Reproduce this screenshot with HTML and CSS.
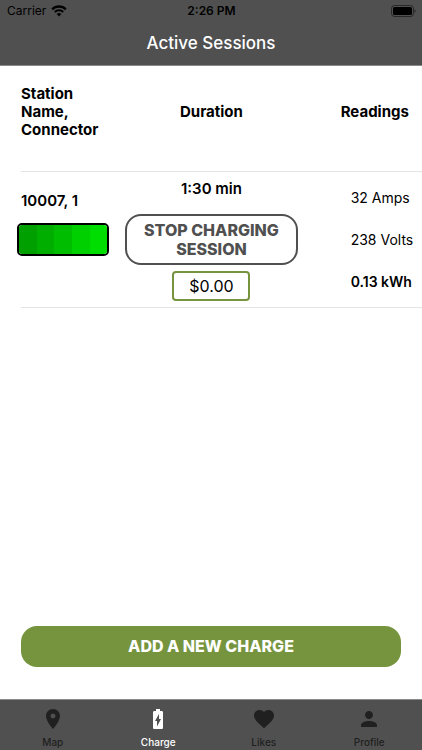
FILE: index.html
```html
<!DOCTYPE html>
<html lang="en">
<head>
<meta charset="utf-8">
<meta name="viewport" content="width=device-width, initial-scale=1">
<title>Active Sessions</title>
<link rel="stylesheet" href="styles.css">
</head>
<body>
<header class="top">
  <div class="status">
    <div class="carrier">
      <span>Carrier</span>
      <svg class="wifi" viewBox="0 0 16 12" aria-hidden="true">
        <path d="M1.2 4.3a9.7 9.7 0 0 1 13.6 0" fill="none" stroke="currentColor" stroke-width="2.4"/>
        <path d="M3.8 7a6 6 0 0 1 8.4 0" fill="none" stroke="currentColor" stroke-width="2.1"/>
        <path d="M5.7 9.1a3.3 3.3 0 0 1 4.6 0L8 11.5z" fill="currentColor"/>
      </svg>
    </div>
    <span class="clock">2:26 PM</span>
    <svg class="power" viewBox="0 0 25 12" aria-hidden="true">
      <rect x=".5" y=".5" width="22" height="11" rx="3" fill="none" stroke="currentColor" opacity=".5"/>
      <rect x="2" y="2" width="19" height="8" rx="1.5" fill="currentColor"/>
      <path d="M23.6 4.2c1.4.5 1.4 3.1 0 3.6z" fill="currentColor" opacity=".6"/>
    </svg>
  </div>
  <h1 class="title">Active Sessions</h1>
</header>

<main class="content">
  <table class="sessions">
    <thead>
      <tr>
        <th class="station" scope="col">Station Name, Connector</th>
        <th class="duration" scope="col">Duration</th>
        <th class="readings" scope="col">Readings</th>
      </tr>
    </thead>
    <tbody>
      <tr>
        <td class="station">
          <div class="name">10007, 1</div>
          <div class="level" role="img" aria-label="Charging">
            <span class="cell cell-1"></span><span class="cell cell-2"></span><span class="cell cell-3"></span><span class="cell cell-4"></span><span class="cell cell-5"></span>
          </div>
        </td>
        <td class="duration">
          <div class="time">1:30 min</div>
          <button class="stop" type="button">STOP CHARGING SESSION</button>
          <div class="price">$0.00</div>
        </td>
        <td class="readings">
          <ul class="values">
            <li>32 Amps</li>
            <li>238 Volts</li>
            <li class="energy">0.13 kWh</li>
          </ul>
        </td>
      </tr>
    </tbody>
  </table>
  <button class="add" type="button">ADD A NEW CHARGE</button>
</main>

<nav class="tabs">
  <a class="tab" href="#map">
    <svg class="icon" viewBox="0 0 24 24" aria-hidden="true"><path d="M12 2C8.13 2 5 5.13 5 9c0 5.25 7 13 7 13s7-7.75 7-13c0-3.87-3.13-7-7-7zm0 9.5a2.5 2.5 0 0 1 0-5 2.5 2.5 0 0 1 0 5z"/></svg>
    <span>Map</span>
  </a>
  <a class="tab active" href="#charge" aria-current="page">
    <svg class="icon" viewBox="0 0 24 24" aria-hidden="true"><path fill-rule="evenodd" d="M15.67 4H14V2h-4v2H8.33C7.6 4 7 4.6 7 5.33v15.33C7 21.4 7.6 22 8.33 22h7.33c.74 0 1.34-.6 1.34-1.33V5.33C17 4.6 16.4 4 15.67 4zM11 19.5V14H9l4-7v5h2z"/></svg>
    <span>Charge</span>
  </a>
  <a class="tab" href="#likes">
    <svg class="icon" viewBox="0 0 24 24" aria-hidden="true"><path d="M12 21.35l-1.45-1.32C5.4 15.36 2 12.28 2 8.5 2 5.42 4.42 3 7.5 3c1.74 0 3.41.81 4.5 2.09C13.09 3.81 14.76 3 16.5 3 19.58 3 22 5.42 22 8.5c0 3.78-3.4 6.86-8.55 11.54z"/></svg>
    <span>Likes</span>
  </a>
  <a class="tab" href="#profile">
    <svg class="icon" viewBox="0 0 24 24" aria-hidden="true"><path d="M12 12c2.21 0 4-1.79 4-4s-1.79-4-4-4-4 1.79-4 4 1.79 4 4 4zm0 2c-2.67 0-8 1.34-8 4v2h16v-2c0-2.66-5.33-4-8-4z"/></svg>
    <span>Profile</span>
  </a>
</nav>
</body>
</html>
```

FILE: styles.css
```css
* {
  box-sizing: border-box;
}

body {
  margin: 0;
  min-height: 100vh;
  display: flex;
  flex-direction: column;
  background: #fff;
  color: #000;
  font-family: Inter, "Liberation Sans", sans-serif;
  font-size: 14px;
  line-height: 20px;
}

button {
  font-family: inherit;
  font-weight: 800;
  font-size: 16px;
  cursor: pointer;
}

.top {
  background: #505050;
  border-bottom: 1px solid #8a8a8a;
}

.status {
  display: grid;
  grid-template-columns: 1fr auto 1fr;
  align-items: center;
  height: 22px;
  padding: 0 6px 0 7px;
  font-size: 12px;
}

.carrier {
  display: flex;
  align-items: center;
  gap: 5px;
}

.wifi {
  width: 16px;
  height: 12px;
}

.clock {
  font-weight: 600;
}

.power {
  width: 25px;
  height: 12px;
  justify-self: end;
}

.title {
  margin: 0;
  color: #fff;
  font-size: 17px;
  font-weight: 500;
  line-height: 43px;
  text-align: center;
}

.content {
  flex: 1;
  display: flex;
  flex-direction: column;
  padding: 0 0 32px 21px;
}

.sessions {
  width: 100%;
  table-layout: fixed;
  border-collapse: collapse;
}

.sessions tr {
  border-bottom: 1px solid #e4e4e4;
}

.sessions th {
  padding: 19px 0 32px;
  font-size: 15px;
  line-height: 18px;
  font-weight: 700;
}

.sessions td {
  padding: 7px 0 6px;
}

.sessions .station {
  width: 26%;
  text-align: left;
}

.sessions .duration {
  width: 43%;
  text-align: center;
}

.sessions .readings {
  text-align: left;
}

.sessions th.station {
  padding-right: 16px;
}

.sessions td.station {
  padding-top: 19px;
  vertical-align: top;
}

.sessions th.readings {
  padding-left: 43px;
}

.sessions td.readings {
  padding-left: 53px;
}

.name,
.time {
  font-size: 15px;
  font-weight: 600;
}

.level {
  display: flex;
  height: 33px;
  margin: 12px 16px 0 -4px;
  border: 2px solid #000;
  border-radius: 5px;
  overflow: hidden;
}

.cell {
  flex: 1;
}

.cell-1 { background: #00a000; }
.cell-2 { background: #00ae00; }
.cell-3 { background: #00bd00; }
.cell-4 { background: #00cf00; }
.cell-5 { background: #00dd00; }

.stop {
  display: block;
  width: 100%;
  margin: 15px 0 6px;
  padding: 5px 8px 4px;
  border: 2px solid #505050;
  border-radius: 16px;
  background: #fff;
  color: #505050;
  line-height: 19px;
}

.price {
  width: 78px;
  margin: 0 auto;
  border: 2px solid #76943e;
  border-radius: 4px;
  font-size: 16px;
  line-height: 26px;
}

.values {
  display: flex;
  flex-direction: column;
  gap: 22px;
  margin: 0;
  padding: 0;
  list-style: none;
  white-space: nowrap;
}

.energy {
  font-weight: 600;
}

.add {
  margin: auto 21px 0 0;
  padding: 10px;
  border: 0;
  border-radius: 16px;
  background: #76943e;
  color: #fff;
  line-height: 21px;
}

.tabs {
  display: grid;
  grid-template-columns: repeat(4, 1fr);
  background: #505050;
  border-top: 1px solid #8a8a8a;
}

.tab {
  display: flex;
  flex-direction: column;
  align-items: center;
  gap: 4px;
  padding: 7px 0 1px;
  color: #202020;
  font-size: 10px;
  font-weight: 500;
  line-height: 14px;
  text-decoration: none;
}

.tab.active {
  color: #fff;
}

.icon {
  width: 24px;
  height: 24px;
  fill: currentColor;
}
```
